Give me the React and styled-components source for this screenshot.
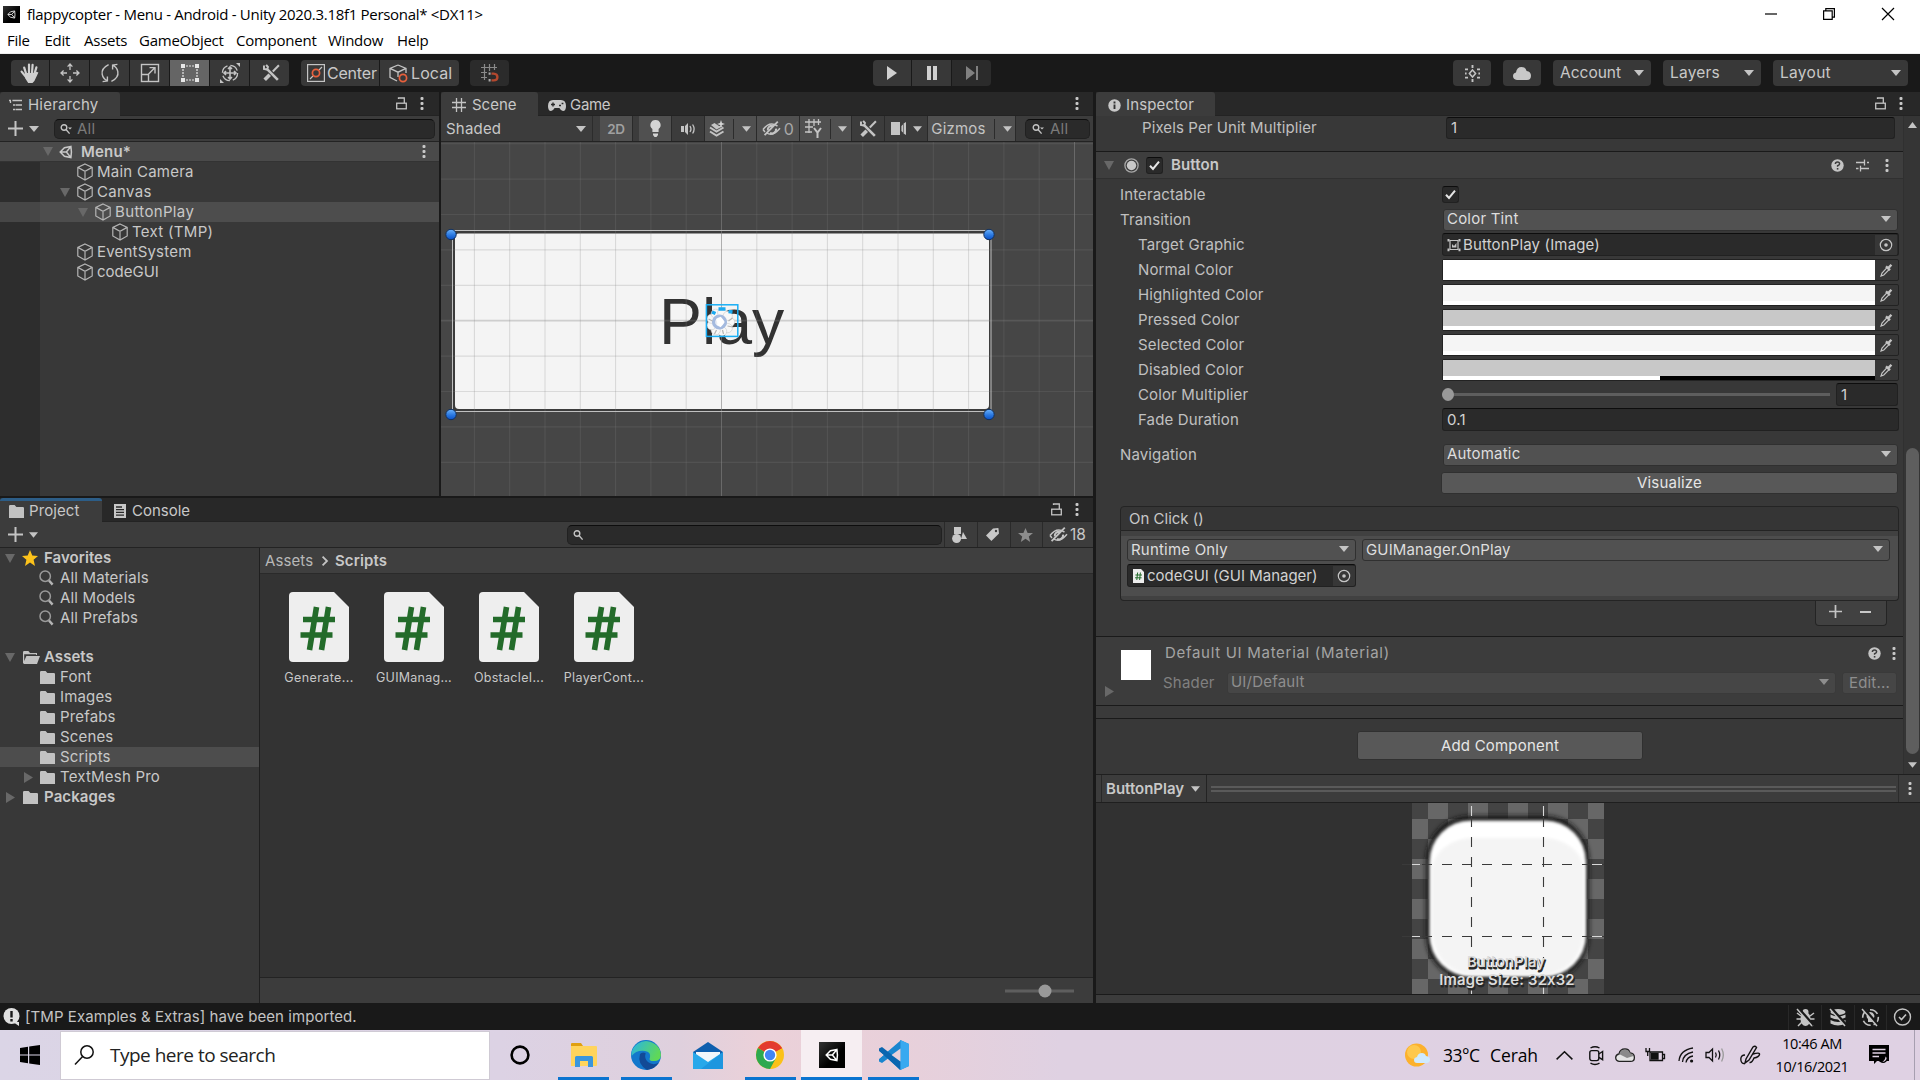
import React from "react";
import styled, { createGlobalStyle, css } from "styled-components";

const Global = createGlobalStyle`
  * { box-sizing: border-box; }
  body { margin: 0; background: #191919; overflow: hidden; }
`;

const ui = `Inter, "Liberation Sans", sans-serif`;
const win = `"Open Sans", "Noto Sans", sans-serif`;

/* ---------- primitives ---------- */
const Screen = styled.div`
  width: 1920px; height: 1080px; display: flex; flex-direction: column;
  background: #191919; color: #c8c8c8; font: 15px ${ui}; letter-spacing: 0.2px; white-space: nowrap; overflow: hidden;
  font-feature-settings: "calt" 0;
`;
const Row = styled.div`
  display: flex; align-items: center; flex: none;
  height: ${p => (p.$h ? p.$h + "px" : "auto")};
  padding-left: ${p => p.$pl || 0}px;
`;
const Col = styled.div`
  display: flex; flex-direction: column; flex: none; width: ${p => (p.$w ? p.$w + "px" : "auto")};
`;
const Gap = styled.div`flex: none; width: ${p => p.$w || 0}px; height: ${p => p.$h || 0}px;`;
const Grow = styled.div`flex: 1;`;
const Text = styled.span`
  flex: none; line-height: 20px;
  width: ${p => (p.$w ? p.$w + "px" : "auto")};
  font-weight: ${p => (p.$b ? 600 : 400)};
  ${p => p.$c && css`color: ${p.$c};`}
  ${p => p.$s && css`font-size: ${p.$s}px;`}
  ${p => p.$ls !== undefined && css`letter-spacing: ${p.$ls}px;`}
`;
const Svg = styled.svg`display: block; flex: none; overflow: visible;`;
const Ico = ({ w = 16, h, vb, children, c = "#c4c4c4", sw = 1.3, fill = "none" }) => (
  <Svg width={w} height={h || w} viewBox={vb || `0 0 ${w} ${h || w}`} fill={fill} stroke={fill === "none" ? c : "none"} strokeWidth={sw}>{children}</Svg>
);

/* ---------- icons ---------- */
const Down = ({ c = "#c4c4c4", w = 10, h = 6 }) => <Ico w={w} h={h} vb="0 0 10 6" fill={c}><path d="M0 0H10L5 6Z" /></Ico>;
const FoldDown = () => <Ico w={10} h={9} fill="#686868"><path d="M0 0H10L5 9Z" /></Ico>;
const FoldRight = () => <Ico w={9} h={11} fill="#686868"><path d="M0 0L9 5.5L0 11Z" /></Ico>;
const Dots = () => <Ico w={4} h={13} fill="#c8c8c8"><rect x="0.5" y="0" width="3" height="3" rx="1" /><rect x="0.5" y="5" width="3" height="3" rx="1" /><rect x="0.5" y="10" width="3" height="3" rx="1" /></Ico>;
const Lock = () => <Ico w={11} h={13}><rect x="0.7" y="6.2" width="9.6" height="5.6" /><path d="M2.5 2V1H8.3V6" /></Ico>;
const Cube = () => (
  <Ico w={18} h={18} c="#b4b4b4" sw={1.2}><path d="M9 1L16.2 4.4V13L9 17L1.8 13V4.4Z M1.8 4.4L9 8.2L16.2 4.4 M9 8.2V17" /></Ico>
);
const Unity = ({ w = 16, c = "#c8c8c8" }) => (
  <Ico w={w} vb="0 0 16 16" c={c} sw={1.7}><path d="M13.6 1.6L6.2 3.2L1.4 8L6.2 12.8L13.6 14.4L14.2 8Z M1.8 8H8.4L13.6 1.8 M8.4 8L13.6 14.2" /></Ico>
);
const Search = ({ arrow }) => (
  <Ico w={12} h={12} c="#c4c4c4" sw={1.4}><circle cx="4" cy="4.5" r="2.8" /><path d="M6.2 6.8L9.6 10.6" />{arrow && <path d="M8 4.4H12L10 6.6Z" fill="#c4c4c4" stroke="none" />}</Ico>
);
const BigSearch = () => <Ico w={15} h={16} c="#9a9a9a" sw={1.5}><circle cx="6.2" cy="6.2" r="5.2" /><path d="M10 10.5L13.6 14.6" stroke="#b4b4b4" strokeWidth="2.4" /></Ico>;
const Plus = ({ w = 15 }) => <Ico w={w} vb="0 0 15 15" sw={2}><path d="M7.5 0V15M0 7.5H15" /></Ico>;
const Folder = () => <Ico w={15} h={13} fill="#c2c2c2"><path d="M0 1.2Q0 0 1.2 0H5.6L7.4 2H13.8Q15 2 15 3V13H0Z" /></Ico>;
const FolderOpen = () => <Ico w={17} h={13} fill="#c2c2c2"><path d="M0 12V1.2Q0 0 1.2 0H5.4L7 2H14V4H13V3.2H1.2V10L3.4 5H17L14 13H1Z" /></Ico>;
const Check = () => <Ico w={13} h={13} c="#e6e6e6" sw={2}><path d="M2 6.8L5 10L11 2.6" /></Ico>;
const Hash = () => <Ico w={14} h={14} sw={1.3}><path d="M4.5 0V14M9.5 0V14M0 4.5H14M0 9.5H14" /></Ico>;
const Help = () => (
  <Ico w={13} h={13} fill="#c4c4c4"><circle cx="6.5" cy="6.5" r="6.2" /><path d="M4.4 5Q4.4 3 6.5 3Q8.6 3 8.6 4.8Q8.6 6 6.6 6.8V7.8" fill="none" stroke="#3c3c3c" strokeWidth="1.5" /><rect x="5.8" y="9" width="1.6" height="1.6" fill="#3c3c3c" /></Ico>
);
const Preset = () => <Ico w={13} h={13} sw={1.3}><path d="M0 3.5H8M11 3.5H13M8.5 0.6V6.4M0 9.5H2.5M5 9.5H13M4.5 6.8V12.4" /></Ico>;
const EyeOff = () => (
  <Ico w={19} h={15} sw={1.5}><path d="M1 8.5Q8 -0.5 15.5 5.2M18 7.2Q10.5 16 4.8 12M1 8.5L3 11" /><path d="M5.8 9.4A3.8 3.8 0 0 1 11 5.2M14 7.6A4 4 0 0 1 8 11.8" strokeWidth="2" /><path d="M2.6 14.2L15.8 0.6" strokeWidth="1.8" /></Ico>
);
const Tools = () => (
  <Ico w={18} h={18} vb="0 0 20 20" sw={2.8}><path d="M6 6L17.6 17.6" /><path d="M2.2 1.6V5.4L5.6 6.2L6.6 3.4L4.6 1" strokeWidth="2.2" /><path d="M18.8 1.4L12 8.4" strokeWidth="2.2" /><path d="M8.6 12L3 17.6" strokeWidth="4" /></Ico>
);
const Target = () => <Ico w={14} h={14} sw={1.2}><circle cx="7" cy="7" r="5.7" /><circle cx="7" cy="7" r="1.8" fill="#c4c4c4" stroke="none" /></Ico>;
const Dropper = () => <Ico w={13} h={14} sw={1.2}><path d="M7 4.6L2 10L1 13L3.8 12L8.8 6.8" /><path d="M6 3.4L10 7.2M8 5.4L11.4 1.8" strokeWidth="2.4" /></Ico>;
const CsFile = () => (
  <Ico w={60} h={70} fill="#eee"><path d="M4 0H45L60 15V66Q60 70 56 70H4Q0 70 0 66V4Q0 0 4 0Z" />
    <path d="M27.5 15L20.5 58M39.5 15L32.5 58M14 27.5H46M11.5 43H43.5" fill="none" stroke="#236b2a" strokeWidth="5.6" /></Ico>
);

/* ---------- window chrome ---------- */
const TitleBar = styled.div`
  display: flex; align-items: center; height: 28px; background: #fff; color: #000; font: 15px ${win}; letter-spacing: -0.3px; padding-left: 3px; flex: none;
`;
const UnityBadge = styled.div`
  width: ${p => p.$s}px; height: ${p => p.$s}px; background: linear-gradient(135deg, #333, #000 60%); display: grid; place-items: center; flex: none;
`;
const MenuBar = styled(TitleBar)`height: 26px; border-bottom: 1px solid #eee; padding: 0 0 1px 7px;`;
const MenuItem = styled.span`width: ${p => p.$w}px; letter-spacing: ${p => p.$ls || 0}px;`;

const Toolbar = styled(Row)`height: 38px; background: #191919; padding: 0 0 0 11px;`;
const ToolBtn = styled.div`
  height: 26px; width: ${p => p.$w}px; background: ${p => (p.$on ? "#656565" : p.$dim ? "#2b2b2b" : "#383838")};
  display: flex; align-items: center; justify-content: ${p => (p.$left ? "flex-start" : "center")}; flex: none;
  padding: 0 ${p => (p.$left ? 7 : 0)}px; gap: ${p => p.$gap || 0}px; margin-right: ${p => p.$mr ?? 1}px;
  border-radius: ${p => p.$r || "0"}; font-size: 16px; letter-spacing: ${p => p.$ls ?? 0.3}px;
`;
const PivotBtn = styled(ToolBtn)`padding-left: ${p => p.$pl}px; justify-content: flex-start;`;

const HandIcon = () => (
  <Ico w={20} h={20} c="#d0d0d0" sw={2.2}><path d="M6.5 12L4.2 4.6M9 10V1.6M12 10L12.6 1.8M14.4 11L16.4 4.4M1.6 8.6L6 14" strokeLinecap="round" /><path d="M5.4 10H15.2L16.4 8.8L18.4 9.4L14.4 18L12.5 20H8.2L5 15Z" fill="#d0d0d0" stroke="none" /></Ico>
);
const MoveIcon = () => <Ico w={20} h={20} sw={1.3}><path d="M10 1V7M10 13V19M1 10H7M13 10H19M7.6 3.6L10 1L12.4 3.6M7.6 16.4L10 19L12.4 16.4M3.6 7.6L1 10L3.6 12.4M16.4 7.6L19 10L16.4 12.4" /></Ico>;
const RotateIcon = () => <Ico w={20} h={20} sw={1.4}><path d="M8.6 1.6Q1 5.4 2.2 11.4Q3 15.6 7 17.6M2.6 18.6L7.4 18V13.4M11.4 18.4Q19 14.6 17.8 8.6Q17 4.4 13 2.4M17.4 1.4L12.6 2V6.6" /></Ico>;
const ScaleIcon = () => <Ico w={20} h={20} sw={1.4}><rect x="1.5" y="1.5" width="17" height="17" /><path d="M1.5 11.5H8.5V18.5M9.5 4.6H15V10.4M15 4.6L8.4 11.2" /></Ico>;
const RectIcon = () => <Ico w={20} h={20} c="#e6e6e6" sw={1.2}><path d="M6 3H14M6 17H14M3 6V14M17 6V14" strokeDasharray="2 1" /><path d="M3 1V5M3 15V19M17 1V5M17 15V19" strokeWidth="4" /></Ico>;
const TransformIcon = () => <Ico w={20} h={20} sw={1.3}><circle cx="10" cy="10" r="7.6" strokeDasharray="9 3" /><path d="M10 4V16M4 10H16M8 6L10 4L12 6M8 14L10 16L12 14M6 8L4 10L6 12M14 8L16 10L14 12" strokeWidth="1.6" /><path d="M16 0H20V4ZM0 16V20H4Z" fill="#c4c4c4" stroke="none" /></Ico>;
const CenterIcon = () => <Ico w={18} h={18} sw={1.2}><rect x="0.6" y="0.6" width="16.8" height="16.8" /><path d="M3 15L6 12M12 6L15 3" /><circle cx="9" cy="9" r="3.6" stroke="#e8603c" strokeWidth="1.7" /></Ico>;
const LocalIcon = () => <Ico w={19} h={19} sw={1.3}><path d="M9 1L17 4.4V9M9 1L1 4.4V13.4L8 17M1 4.4L9 8.2L17 4.4M9 8.2V13" /><circle cx="14" cy="14" r="3.6" stroke="#e8603c" strokeWidth="1.7" /></Ico>;
const SnapIcon = () => <Ico w={18} h={18} c="#8a8a8a" sw={1.2}><path d="M3.5 0V16M8.5 0V7M13.5 0V6M0 3.5H16M0 8.5H6M0 13.5H6" /><path d="M10.5 9.6H12.5Q16.4 9.8 16.4 13Q16.4 16.4 12.5 16.4H10.5" stroke="#b4482e" strokeWidth="2.4" /><path d="M8.6 8.4V10.8M8.6 15V17.6" stroke="#aaa" strokeWidth="2" /></Ico>;
const CollabIcon = () => <Ico w={17} h={17} sw={1.5}><path d="M8.5 5L11.6 8.5L8.5 12L5.4 8.5Z" /><path d="M8.5 0V3M8.5 14V17M1 4.4H4M13 4.4H16M1 12.6H4M13 12.6H16M1 8.5H2.6M14.4 8.5H16" strokeWidth="1.9" /></Ico>;

const EditorToolbar = () => (
  <Toolbar>
    <ToolBtn $w={38} $r="4px 0 0 4px"><HandIcon /></ToolBtn>
    <ToolBtn $w={39}><MoveIcon /></ToolBtn>
    <ToolBtn $w={39}><RotateIcon /></ToolBtn>
    <ToolBtn $w={39}><ScaleIcon /></ToolBtn>
    <ToolBtn $w={39} $on><RectIcon /></ToolBtn>
    <ToolBtn $w={39}><TransformIcon /></ToolBtn>
    <ToolBtn $w={39} $r="0 4px 4px 0" $mr={12}><Gap $w={2} /><Tools /></ToolBtn>
    <PivotBtn $w={78} $r="4px 0 0 4px" $pl={6} $gap={2} $ls={-0.2}><CenterIcon />Center</PivotBtn>
    <PivotBtn $w={79} $r="0 4px 4px 0" $pl={9} $gap={3} $ls={0.1} $mr={11}><LocalIcon />Local</PivotBtn>
    <ToolBtn $w={39} $dim $r="4px"><SnapIcon /></ToolBtn>
    <Gap $w={363} />
    <ToolBtn $w={38} $r="4px 0 0 4px"><Ico w={10} h={14} fill="#d0d0d0"><path d="M0 0L10 7L0 14Z" /></Ico></ToolBtn>
    <ToolBtn $w={39}><Ico w={10} h={14} fill="#d0d0d0"><path d="M0 0H4V14H0ZM6 0H10V14H6Z" /></Ico></ToolBtn>
    <ToolBtn $w={39} $dim $r="0 4px 4px 0" $mr={462}><Ico w={12} h={14} fill="#808080"><path d="M0 0L9 7L0 14ZM10 0H12V14H10Z" /></Ico></ToolBtn>
    <ToolBtn $w={38} $r="4px" $mr={12}><CollabIcon /></ToolBtn>
    <ToolBtn $w={38} $r="4px" $mr={12}><Ico w={18} h={13} fill="#c8c8c8"><path d="M4 13Q0 12.6 0 9Q0 6.4 3 5.6Q3.6 0 8.6 0Q12.6 0 13.6 4Q18 4.6 18 8.8Q18 13 14 13Z" /></Ico></ToolBtn>
    {[["Account", 98, 0], ["Layers", 98, 0.2], ["Layout", 135, 0.3]].map(([t, w, ls]) => (
      <ToolBtn key={t} $w={w} $r="4px" $left $mr={12} $ls={ls}><Text $s={15.5}>{t}</Text><Grow /><Down /></ToolBtn>
    ))}
  </Toolbar>
);

/* ---------- panels ---------- */
const Main = styled.div`display: flex; height: 911px; flex: none;`;
const TabStrip = styled(Row)`height: 24px; background: #282828; align-items: flex-end; border-bottom: 1px solid #232323;`;
const Tab = styled.div`
  height: 24px; margin-bottom: -1px; width: ${p => p.$w}px; display: flex; align-items: center; flex: none;
  gap: ${p => p.$gap || 5}px; padding: ${p => (p.$focus ? "0 0 1px" : "2px 0 0")} ${p => p.$pl || 8}px;
  padding-right: 0; padding-left: ${p => p.$pl || 8}px; border-radius: 3px 3px 0 0;
  background: ${p => (p.$off ? "transparent" : "#3c3c3c")};
  border-top: ${p => (p.$focus ? "3px solid #2c5d87" : "0")};
  line-height: 20px; letter-spacing: ${p => p.$ls ?? 0.3}px;
`;
const PanelBar = styled(Row)`height: 26px; background: #3c3c3c; border-bottom: 1px solid #232323;`;
const Field = styled.div`
  height: ${p => p.$h || 20}px; width: ${p => p.$w}px; background: #2a2a2a; border: 1px solid #212121; border-top-color: #0d0d0d;
  border-radius: ${p => p.$r ?? 3}px; display: flex; align-items: center; padding-left: ${p => p.$pl ?? 4}px; gap: ${p => p.$gap || 0}px; flex: none; color: #d2d2d2;
  overflow: hidden;
`;
const SearchField = styled(Field)`border-radius: 5px; color: #7a7a7a;`;

const Tree = styled.div`flex: 1; display: flex; flex-direction: column; background: #383838;`;
const TreeBody = styled(Tree)`background: linear-gradient(90deg, #2d2d2d 40px, #383838 40px);`;
const TreeRow = styled(Row)`
  height: 20px; padding-left: ${p => p.$pl}px; background: ${p => (p.$on ? "#4d4d4d" : "transparent")};
  ${p => p.$head && css`background: #4a4a4a; border-bottom: 1px solid #333;`}
`;
const SelGutter = styled(TreeRow)`background: linear-gradient(90deg, #464646 40px, #4d4d4d 40px);`;
const FoldSlot = styled.div`width: ${p => p.$w || 16}px; flex: none; display: flex;`;

const hier = [
  [76, "Main Camera", 0, 0, 0.25], [60, "Canvas", 1, 0, 0.35], [78, "ButtonPlay", 1, 1, 0.35],
  [111, "Text (TMP)", 0, 0, 0.3], [76, "EventSystem", 0, 0, 0.2], [76, "codeGUI", 0, 0, 0],
];
const Hierarchy = () => (
  <Col $w={439}>
    <TabStrip>
      <Tab $w={120} $pl={9} $gap={6} $ls={0.2}><Ico w={13} h={12} sw={1.3}><path d="M0 1.5H2M3.4 1.5H13M4 6H6M6.5 6H13M4 10.5H6M6.5 10.5H13M1.5 2V4" /></Ico>Hierarchy</Tab>
      <Gap $w={276} /><Row $h={24}><Lock /><Gap $w={13} /><Dots /></Row>
    </TabStrip>
    <PanelBar>
      <Gap $w={8} /><Plus /><Gap $w={6} /><Down /><Gap $w={15} />
      <SearchField $w={381} $pl={5} $gap={5}><Search arrow />All</SearchField>
    </PanelBar>
    <TreeBody>
      <TreeRow $pl={43} $head><FoldSlot $w={16}><FoldDown /></FoldSlot><Unity w={14} /><Gap $w={8} /><Text $b $w={341} $ls={0.2}>Menu*</Text><Dots /></TreeRow>
      {hier.map(([x, t, f, on, ls]) => {
        const R = on ? SelGutter : TreeRow;
        return <R key={t} $pl={x}>{!!f && <FoldSlot><FoldDown /></FoldSlot>}<Cube /><Gap $w={3} /><Text $ls={ls}>{t}</Text></R>;
      })}
    </TreeBody>
  </Col>
);

const SBtn = styled.div`
  height: 25px; width: ${p => p.$w}px; background: ${p => (p.$on ? "#505050" : "transparent")};
  border-right: 1px solid #2a2a2a; display: flex; align-items: center; justify-content: center; gap: ${p => p.$gap || 0}px; flex: none; color: #c4c4c4;
`;
const VLine = styled.div`width: 1px; height: ${p => p.$h || 20}px; background: #2c2c2c; flex: none;`;

const Viewport = styled.div`flex: 1; background: #464646; overflow: hidden;`;
const Scene = () => {
  const ox = 441, oy = 142;
  const vs = Array.from({ length: 18 }, (_, i) => 721.5 + 35.3 * (i - 7) - ox);
  const hs = Array.from({ length: 10 }, (_, i) => 320.7 + 35.4 * (i - 5) - oy);
  return (
    <Viewport>
      <Svg width="652" height="354">
        <defs>
          <linearGradient id="knob" x1="0" y1="0" x2="0" y2="1"><stop offset="0" stopColor="#6db4ff" /><stop offset="0.55" stopColor="#2a78e0" /><stop offset="1" stopColor="#0a50c8" /></linearGradient>
        </defs>
        <rect x="12" y="89" width="538" height="180" fill="#3c3c3c" />
        <rect x="14" y="91.5" width="534" height="175.5" rx="4" fill="#f4f4f4" />
        <text x="218" y="201.5" fontFamily="Liberation Sans, Arial, sans-serif" fontSize="64.4" letterSpacing="0" fill="#323232">Play</text>
        {vs.map((x, i) => <path key={i} d={`M${x} 0V354`} stroke="#808080" strokeOpacity={i === 7 || i === 17 ? 0.6 : 0.25} />)}
        {hs.map((y, i) => <path key={i} d={`M0 ${y}H652`} stroke="#808080" strokeOpacity={i === 5 ? 0.32 : 0.22} strokeWidth={i === 5 ? 1.8 : 1.2} />)}
        <rect x="11.5" y="88.5" width="538.5" height="181" fill="none" stroke="#c0c0c0" />
        {[[10, 92.5], [548, 92.5], [10, 272.5], [548, 272.5]].map(([x, y], i) => <circle key={i} cx={x} cy={y} r="5.2" fill="url(#knob)" stroke="#12305c" strokeWidth="1" />)}
        <g transform="translate(279.5 180)">
          {Array.from({ length: 9 }, (_, i) => <circle key={i} cx={9.5 * Math.cos(i * 0.698)} cy={9.5 * Math.sin(i * 0.698)} r="4.6" fill="#f8f8f8" stroke="#cacaca" strokeWidth="0.6" />)}
          <path d="M-8.500 -10L-5 -8.500M-2 -13H5M8 -10.500L12 -10" stroke="#1aa9ef" strokeWidth="3.4" />
          <circle r="6" cx="-1" fill="#e8ecf4" stroke="#a4badf" strokeWidth="3.2" />
          <path d="M-4 -2L0 -4L3 0L0 4L-3 2M-2 0L2 2" fill="#fff" stroke="#fff" strokeWidth="2" />
          <path d="M-12 -3L-8 -1M12 5L7 4M-6 12L-4 8M12 -4L8 -1M3 12L2 8" stroke="#b4b4b4" strokeWidth="1.2" />
        </g>
        <rect x="265.4" y="162.8" width="31.4" height="31.6" fill="none" stroke="#19aef5" strokeWidth="1.5" />
      </Svg>
    </Viewport>
  );
};
const ScenePanel = () => (
  <Col $w={652}>
    <TabStrip>
      <Tab $w={97} $pl={11} $gap={6} $ls={0}><Hash />Scene</Tab>
      <Tab $off $w={100} $pl={10} $gap={4} $ls={-0.3}><Ico w={18} h={11} fill="#c8c8c8"><path d="M5 0H13Q18 0 18 6Q18 11 15 11Q13 11 11.4 8H6.6Q5 11 3 11Q0 11 0 6Q0 0 5 0Z" /><path d="M3 4.5H7M5 2.5V6.5M11 5.5H13M13.6 3.5H15.4" stroke="#282828" strokeWidth="1.4" /></Ico>Game</Tab>
      <Gap $w={437} /><Row $h={24}><Dots /></Row>
    </TabStrip>
    <PanelBar>
      <Gap $w={5} /><Text $w={130} $ls={0.2}>Shaded</Text><Down /><Gap $w={6} /><VLine $h={25} /><Gap $w={7} />
      <SBtn $w={33} $on><Text $s={13.5} $ls={-0.3} $c="#a0a0a0" $b>2D</Text></SBtn><Gap $w={6} />
      <SBtn $w={33} $on><Ico w={11} h={17} fill="#d4d4d4"><path d="M5.5 0A5 5 0 0 1 8.6 9V12H2.4V9A5 5 0 0 1 5.5 0ZM3 13.5H8V15L6.5 17H4.5L3 15Z" /></Ico></SBtn>
      <SBtn $w={33}><Ico w={15} h={14} sw={1.3}><path d="M0 4H3V10H0ZM4 4L7 1V13L4 10Z" fill="#c4c4c4" stroke="none" /><path d="M9 4Q11 7 9 10M11.6 2.5Q14.6 7 11.6 11.5" /></Ico></SBtn>
      <SBtn $w={52} $on $gap={8}><Ico w={15} h={17} sw={2}><path d="M0 7.5L6.500 11.500L13.500 7.500M0 11.500L6.500 15.500L13.500 11.500" /><path d="M1 5L4.500 3L9 6L13 6L6.500 9.500Z" fill="#c4c4c4" stroke="none" /><path d="M11 0L12 3L15 4L12 5L11 8L10 5L7 4L10 3Z" fill="#d4d4d4" stroke="none" /></Ico><VLine /><Down w={9} /></SBtn>
      <SBtn $w={43} $on $gap={3}><EyeOff /><Text $c="#a8a8a8" $s={16}>0</Text></SBtn>
      <SBtn $w={52} $on $gap={7}><Ico w={18} h={20} sw={1.3}><path d="M4 0V14M9 0V7M13.5 0V6M0 3H16M0 8H8M0 13H7" /><path d="M9 9L12.5 13.5L16 9M12.5 13V19" strokeWidth="2" /></Ico><VLine /><Down w={9} /></SBtn>
      <SBtn $w={33}><Tools /></SBtn>
      <SBtn $w={43} $gap={7}><Ico w={15} h={13} fill="#c4c4c4"><path d="M0 0H9V13H0ZM10.4 4L12 2.6V10.4L10.4 9ZM12.6 1.6L15 0V13L12.6 11.4Z" /></Ico><Down w={9} /></SBtn>
      <SBtn $w={88} $on $gap={8}><Text $ls={0.2}>Gizmos</Text><VLine /><Down w={9} /></SBtn>
      <Gap $w={9} /><SearchField $w={65} $pl={6} $gap={6}><Search arrow />All</SearchField>
    </PanelBar>
    <Scene />
  </Col>
);

/* ---------- project ---------- */
const ProjectBody = styled.div`display: flex; flex: 1;`;
const AssetTree = styled.div`width: 260px; background: #383838; border-right: 1px solid #1f1f1f; flex: none;`;
const AssetPane = styled.div`width: 833px; background: #333; display: flex; flex-direction: column; flex: none;`;
const Crumbs = styled(Row)`height: 26px; background: #3f3f3f; border-bottom: 1px solid #2a2a2a; padding-left: 5px;`;
const Files = styled.div`display: flex; gap: 5px; padding: 18px 0 0 14px; flex: 1;`;
const FileCell = styled.div`width: 90px; display: flex; flex-direction: column; align-items: center; gap: 6px; font-size: 12.5px; letter-spacing: ${p => p.$ls}px;`;
const ZoomBar = styled(Row)`height: 26px; background: #3c3c3c; border-top: 1px solid #232323; padding-left: 745px;`;
const PBtn = styled.div`height: 25px; width: ${p => p.$w}px; border-left: 1px solid #2a2a2a; display: flex; align-items: center; justify-content: center; gap: 2px; padding-right: 3px; flex: none;`;

const tree = [["Font"], ["Images"], ["Prefabs"], ["Scenes"], ["Scripts", 1]];
const Project = () => (
  <Col>
    <TabStrip>
      <Tab $w={102} $focus $pl={9} $gap={5} $ls={0.1}><Folder />Project</Tab>
      <Tab $off $w={120} $pl={12} $gap={6} $ls={0}><Ico w={12} h={14} fill="#c8c8c8"><path d="M0 0H12V14H0Z" /><path d="M2 3H8M2 5.6H10M2 8.4H10M2 11.2H10" stroke="#282828" strokeWidth="1.3" /></Ico>Console</Tab>
      <Gap $w={829} /><Row $h={24}><Lock /><Gap $w={13} /><Dots /></Row>
    </TabStrip>
    <PanelBar>
      <Gap $w={8} /><Plus /><Gap $w={6} /><Down w={9} /><Gap $w={529} />
      <SearchField $w={375} $pl={5}><Search /></SearchField><Gap $w={2} />
      <PBtn $w={33}><Ico w={15} h={16} fill="#c8c8c8"><rect x="2" y="0" width="7" height="7" /><circle cx="4.6" cy="11.5" r="4.5" /><path d="M11 5L15 12H9Z" /></Ico></PBtn>
      <PBtn $w={33}><Ico w={13} h={13} fill="#c8c8c8"><path d="M7 0.6L12.4 0L13 5.4L5.4 13L0 7.4Z" /><circle cx="10" cy="3" r="1.2" fill="#3c3c3c" /></Ico></PBtn>
      <PBtn $w={32}><Ico w={15} h={14} fill="#8c8c8c"><path d="M7.5 0L9.6 5H15L10.8 8.4L12.2 14L7.5 10.8L2.8 14L4.2 8.4L0 5H5.4Z" /></Ico></PBtn>
      <PBtn $w={53}><EyeOff /><Text $s={15.5} $ls={0}>18</Text></PBtn>
    </PanelBar>
    <ProjectBody>
      <AssetTree>
        <TreeRow $pl={5}><FoldDown /><Gap $w={7} /><Ico w={16} h={16} fill="#fcc21b"><path d="M8 0L10.3 5.4L16 6L11.6 9.8L13 16L8 12.6L3 16L4.4 9.8L0 6L5.7 5.4Z" /></Ico><Gap $w={6} /><Text $b $ls={0.05}>Favorites</Text></TreeRow>
        {["All Materials", "All Models", "All Prefabs"].map(t => <TreeRow key={t} $pl={39}><BigSearch /><Gap $w={6} /><Text $ls={0.15}>{t}</Text></TreeRow>)}
        <Gap $h={19} />
        <TreeRow $pl={5}><FoldDown /><Gap $w={8} /><FolderOpen /><Gap $w={4} /><Text $b $ls={0.05}>Assets</Text></TreeRow>
        {tree.map(([t, on]) => <TreeRow key={t} $pl={40} $on={on}><Folder /><Gap $w={5} /><Text $ls={0.15}>{t}</Text></TreeRow>)}
        <TreeRow $pl={24}><FoldRight /><Gap $w={7} /><Folder /><Gap $w={5} /><Text $ls={0.2}>TextMesh Pro</Text></TreeRow>
        <TreeRow $pl={6}><FoldRight /><Gap $w={8} /><Folder /><Gap $w={6} /><Text $b $ls={0.1}>Packages</Text></TreeRow>
      </AssetTree>
      <AssetPane>
        <Crumbs><Text $w={57} $ls={0.1} $c="#b8b8b8">Assets</Text><Ico w={6} h={10} sw={1.8}><path d="M0.6 0.6L5 5L0.6 9.4" /></Ico><Gap $w={7} /><Text $b $ls={0.1}>Scripts</Text></Crumbs>
        <Files>
          {[["Generate...", 0.4], ["GUIManag...", 0.25], ["ObstacleI...", 0.3], ["PlayerCont...", 0.4]].map(([t, ls]) => <FileCell key={t} $ls={ls}><CsFile /><Text>{t}</Text></FileCell>)}
        </Files>
        <ZoomBar><Ico w={70} h={14} fill="#5e5e5e"><rect x="0" y="5.5" width="69" height="3" /><circle cx="40" cy="7" r="6.5" fill="#999" /></Ico></ZoomBar>
      </AssetPane>
    </ProjectBody>
  </Col>
);

/* ---------- inspector ---------- */
const InspectorPane = styled.div`width: 824px; margin-left: 3px; background: #383838; display: flex; flex-direction: column; flex: none;`;
const ScrollArea = styled.div`display: flex; height: 659px; flex: none; border-bottom: 1px solid #1f1f1f;`;
const Body = styled.div`width: 807px; flex: none; display: flex; flex-direction: column;`;
const ScrollBar = styled.div`width: 17px; background: #353535; border-left: 1px solid #303030; display: flex; flex-direction: column; align-items: center; padding-top: 6px; flex: none;`;
const Thumb = styled.div`width: 13px; height: 306px; border-radius: 7px; background: #5e5e5e; margin: 320px 0 8px; flex: none;`;
const CompHead = styled(Row)`height: 28px; background: #3e3e3e; border-top: 1px solid #1a1a1a; border-bottom: 1px solid #303030; padding-left: 8px;`;
const CheckBox = styled.div`width: 17px; height: 17px; border-radius: 3px; background: #2a2a2a; border: 1px solid #212121; border-top-color: #0d0d0d; display: grid; place-items: center; flex: none;`;
const PropRow = styled(Row)`height: 25px;`;
const Label = styled.div`width: 322px; padding-left: ${p => (p.$sub ? 18 : 0)}px; flex: none; letter-spacing: 0.13px; color: #c0c0c0;`;
const Drop = styled.div`
  height: 22px; width: ${p => p.$w}px; border-radius: 3px; background: ${p => (p.$dim ? "#464646" : "#515151")}; border: 1px solid ${p => (p.$dim ? "#3a3a3a" : "#303030")};
  color: ${p => (p.$dim ? "#8e8e8e" : "#dedede")}; display: flex; align-items: center; padding: 0 6px 2px 3px; flex: none; letter-spacing: ${p => p.$ls ?? 0.2}px;
`;
const Btn = styled.div`
  height: ${p => p.$h || 22}px; width: ${p => p.$w}px; border-radius: 3px; background: ${p => (p.$dim ? "#464646" : "#585858")}; border: 1px solid ${p => (p.$dim ? "#3a3a3a" : "#303030")};
  color: ${p => (p.$dim ? "#8e8e8e" : "#e6e6e6")}; display: flex; align-items: center; justify-content: center; flex: none; letter-spacing: 0.2px;
`;
const PickSlot = styled.div`width: 22px; height: 20px; display: grid; place-items: center; background: #373737; flex: none;`;
const ColorField = styled.div`display: flex; width: 457px; height: 22px; border: 1px solid #222; border-radius: 2px; flex: none;`;
const Swatch = styled.div`width: 432px; background: ${p => p.$c}; display: flex; align-items: flex-end; flex: none;`;
const Alpha = styled.div`height: 4px; flex: 1; background: linear-gradient(90deg, #fff ${p => p.$a}%, #000 ${p => p.$a}%);`;
const Slider = styled.div`width: 388px; height: 3px; background: #5e5e5e; display: flex; align-items: center; flex: none;`;
const SliderKnob = styled.div`width: 12px; height: 13px; border-radius: 50%; background: #999; flex: none;`;
const EventHead = styled(Row)`width: 779px; height: 25px; background: #353535; border: 1px solid #242424; border-radius: 4px 4px 0 0; padding-left: 8px; letter-spacing: 0;`;
const EventBody = styled.div`width: 779px; height: 70px; background: #414141; border: 1px solid #242424; border-top: 0; border-radius: 0 0 4px 4px; padding-top: 5px; flex: none;`;
const EventItem = styled.div`height: 60px; background: #4d4d4d; padding: 3px 0 0 6px; display: flex; flex-direction: column; gap: 3px;`;
const EventFoot = styled.div`width: 72px; height: 25px; margin-left: 695px; background: #414141; border: 1px solid #242424; border-top: 0; border-radius: 0 0 4px 4px; display: flex; align-items: center; justify-content: center; gap: 18px; padding: 0 3px 3px 0; flex: none;`;
const MiniCs = () => <Ico w={12} h={14} fill="#eee"><path d="M1 0H9L12 3V14H1Z" /><path d="M5.6 3.5L4.8 11M8.4 3.5L7.6 11M3.4 6H10M3 8.8H9.6" fill="none" stroke="#236b2a" strokeWidth="1" /></Ico>;
const Material = styled.div`height: 69px; background: #3c3c3c; border-top: 1px solid #1a1a1a; display: flex; flex: none;`;
const MatSwatch = styled.div`width: 30px; height: 30px; background: #fff; margin-top: 13px; flex: none;`;
const MatFold = styled.div`width: 25px; padding: 49px 0 0 9px; flex: none;`;
const ThinStrip = styled.div`height: 14px; background: #3a3a3a; border-top: 1px solid #1a1a1a; border-bottom: 1px solid #1a1a1a; flex: none;`;
const PreviewHead = styled(Row)`height: 28px; background: #3c3c3c; border-bottom: 1px solid #1f1f1f; padding-left: 5px;`;
const PreviewName = styled(Row)`height: 27px; width: 106px; border-left: 1px solid #282828; border-right: 1px solid #232323; padding: 1px 0 0 4px;`;
const Grip = styled.div`width: 685px; height: 6px; margin: 0 2px 0 4px; border-top: 2px solid #5a5a5a; border-bottom: 2px solid #5a5a5a; flex: none;`;
const Preview = styled.div`height: 191px; background: #313131; display: flex; justify-content: center; flex: none;`;
const PreviewFoot = styled.div`height: 9px; background: #3c3c3c; border-top: 1px solid #1a1a1a; flex: none;`;

const SpritePreview = () => (
  <Svg width="192" height="191">
    <defs>
      <pattern id="chk" x="-4" y="-4" width="40" height="40" patternUnits="userSpaceOnUse"><rect width="40" height="40" fill="#676767" /><path d="M0 0H20V20H0ZM20 20H40V40H20Z" fill="#444" /></pattern>
      <filter id="soft" x="-10%" y="-10%" width="120%" height="120%"><feGaussianBlur stdDeviation="2.6" /></filter>
      <filter id="soft2" x="-10%" y="-10%" width="120%" height="120%"><feGaussianBlur stdDeviation="1.5" /></filter>
    </defs>
    <rect width="192" height="191" fill="url(#chk)" />
    <rect x="14" y="13" width="163" height="164" rx="44" fill="#161616" filter="url(#soft)" />
    <rect x="17.500" y="17.500" width="156.500" height="156" rx="41" fill="#fff" filter="url(#soft2)" />
    <path d="M20 64Q26 40 56 35H136Q166 40 172 64V132Q166 168 132 172H60Q26 168 20 132Z" fill="#f4f4f4" filter="url(#soft2)" />
    <g stroke="#3a3a3a" strokeWidth="1.1" strokeDasharray="10 10">
      <path d="M59.5 14V191M131.5 14V191M-10 61.5H192M-10 133.5H192" />
    </g>
    <g stroke="#d8d8d8" strokeWidth="1.1"><path d="M59.5 3V13M131.5 3V13M0 61.5H8M180 61.5H190M0 133.5H8M180 133.5H190M59.5 183V191M131.5 183V191" /></g>
    <g fontFamily={ui} fontSize="14.8" fontWeight="600" textAnchor="middle" strokeLinejoin="round">
      <g fill="#262626" stroke="#262626" strokeWidth="0.8"><text x="95" y="165.500" letterSpacing="0.1">ButtonPlay</text><text x="96" y="183.500" letterSpacing="0.2">Image Size: 32x32</text></g>
      <g fill="#dcdcdc"><text x="94" y="164" letterSpacing="0.1">ButtonPlay</text><text x="95" y="182" letterSpacing="0.2">Image Size: 32x32</text></g>
    </g>
  </Svg>
);

const colors = [["Normal Color", "#fff", 100], ["Highlighted Color", "#f5f5f5", 100], ["Pressed Color", "#c8c8c8", 100], ["Selected Color", "#f5f5f5", 100], ["Disabled Color", "#c8c8c8", 50.2]];
const Inspector = () => (
  <InspectorPane>
    <TabStrip>
      <Tab $w={119} $pl={12} $gap={5} $ls={0.15}><Ico w={13} h={13} fill="#c8c8c8"><circle cx="6.5" cy="6.5" r="6.2" /><path d="M6.5 5.6V10M6.5 2.6V4.4" stroke="#333" strokeWidth="1.9" /></Ico>Inspector</Tab>
      <Gap $w={660} /><Row $h={24}><Lock /><Gap $w={13} /><Dots /></Row>
    </TabStrip>
    <ScrollArea>
      <Body>
        <Row $h={23} $pl={46}><Text $w={304} $c="#c0c0c0" $ls={0.1}>Pixels Per Unit Multiplier</Text><Field $w={449} $h={22}>1</Field></Row>
        <Gap $h={12} />
        <CompHead>
          <FoldDown /><Gap $w={10} /><Ico w={15} h={15}><circle cx="7.5" cy="7.5" r="6.6" stroke="#a8a8a8" strokeWidth="1.3" /><circle cx="7.5" cy="7.5" r="4.7" fill="#c8c8c8" stroke="none" /></Ico><Gap $w={7} />
          <CheckBox><Check /></CheckBox><Gap $w={8} /><Text $w={660} $b $ls={0.1}>Button</Text><Help /><Gap $w={12} /><Preset /><Gap $w={16} /><Dots />
        </CompHead>
        <Gap $h={3} />
        <Row $pl={24}>
          <Col>
            <PropRow><Label>Interactable</Label><CheckBox><Check /></CheckBox></PropRow>
            <PropRow><Label>Transition</Label><Gap $w={1} /><Drop $w={455}>Color Tint<Grow /><Down /></Drop></PropRow>
            <PropRow><Label $sub>Target Graphic</Label><Field $w={457} $h={23} $gap={2}><Ico w={14} h={14} sw={1.2}><path d="M3 2.5H11V11.5H3Z" /><path d="M1.5 1V3.6M12.5 1V3.6M1.5 10.6V13.2M12.5 10.6V13.2" strokeWidth="2" /><path d="M5 9.5V6L7 8L9.4 5V9.5Z" fill="#c4c4c4" stroke="none" /></Ico><Text $w={410} $ls={0.15}>ButtonPlay (Image)</Text><PickSlot><Target /></PickSlot></Field></PropRow>
            {colors.map(([t, c, a]) => <PropRow key={t}><Label $sub>{t}</Label><ColorField><Swatch $c={c}><Alpha $a={a} /></Swatch><PickSlot><Dropper /></PickSlot></ColorField></PropRow>)}
            <PropRow><Label $sub>Color Multiplier</Label><Slider><SliderKnob /></Slider><Gap $w={6} /><Field $w={62} $h={23}>1</Field></PropRow>
            <PropRow><Label $sub>Fade Duration</Label><Field $w={457} $h={23}>0.1</Field></PropRow>
            <Gap $h={10} />
            <PropRow><Label>Navigation</Label><Gap $w={1} /><Drop $w={455}>Automatic<Grow /><Down /></Drop></PropRow>
            <Gap $h={3} />
            <PropRow><Gap $w={321} /><Btn $w={457}>Visualize</Btn></PropRow>
            <Gap $h={11} />
            <EventHead>On Click ()</EventHead>
            <EventBody>
              <EventItem>
                <Row><Drop $w={229}>Runtime Only<Grow /><Down /></Drop><Gap $w={6} /><Drop $w={528} $ls={0.15}>GUIManager.OnPlay<Grow /><Down /></Drop></Row>
                <Row><Field $w={229} $h={23} $gap={3}><MiniCs /><Text $w={183} $ls={0}>codeGUI (GUI Manager)</Text><PickSlot><Target /></PickSlot></Field></Row>
              </EventItem>
            </EventBody>
            <EventFoot><Plus w={13} /><Ico w={11} h={2} fill="#c8c8c8"><rect width="11" height="2" /></Ico></EventFoot>
          </Col>
        </Row>
        <Gap $h={10} />
        <Material>
          <MatFold><FoldRight /></MatFold><MatSwatch />
          <Col>
            <Gap $h={6} />
            <Row $h={20} $pl={14}><Text $w={703} $c="#a4a4a4" $ls={0.7}>Default UI Material (Material)</Text><Help /><Gap $w={11} /><Dots /></Row>
            <Gap $h={8} />
            <Row $h={23} $pl={12}><Text $w={64} $c="#808080" $ls={0.2}>Shader</Text><Drop $dim $w={609}>UI/Default<Grow /><Down c="#8e8e8e" /></Drop><Gap $w={6} /><Btn $dim $w={55}>Edit...</Btn></Row>
          </Col>
        </Material>
        <ThinStrip />
        <Gap $h={12} />
        <Row $pl={261}><Btn $w={286} $h={29}>Add Component</Btn></Row>
      </Body>
      <ScrollBar>
        <Ico w={9} h={6} fill="#c4c4c4"><path d="M0 6H9L4.5 0Z" /></Ico><Thumb /><Down w={9} />
      </ScrollBar>
    </ScrollArea>
    <PreviewHead>
      <PreviewName><Text $b $ls={0} $w={85}>ButtonPlay</Text><Down w={9} /></PreviewName><Grip /><VLine $h={27} /><Gap $w={9} /><Dots />
    </PreviewHead>
    <Preview><SpritePreview /></Preview>
    <PreviewFoot />
  </InspectorPane>
);

/* ---------- status bar + taskbar ---------- */
const Status = styled(Row)`height: 27px; background: #191919; padding: 1px 0 0 3px; color: #c4c4c4;`;
const StatusIcon = styled.div`width: ${p => p.$w || 33}px; height: 25px; border-left: 1px solid #282828; display: grid; place-items: center; flex: none;`;
const Taskbar = styled.div`
  height: 50px; display: flex; align-items: center; flex: none; color: #000; font-family: ${win};
  background: linear-gradient(90deg, #dbd5e6 0, #dcd2e4 500px, #dfd0dd 680px, #ebd1d9 760px, #e8d0da 900px, #dfd1e2 1060px, #dfd1e3 100%);
`;
const StartSlot = styled.div`width: 60px; height: 50px; display: grid; place-items: center; flex: none;`;
const TaskSearch = styled.div`width: 430px; height: 49px; margin-top: 1px; background: #fff; border: 1px solid #cfcad4; display: flex; align-items: center; padding: 0 0 1px 13px; gap: 16px; font-size: 19px; letter-spacing: -0.5px; flex: none; color: #222;`;
const AppSlot = styled.div`
  width: ${p => p.$w}px; height: 50px; display: flex; flex-direction: column; align-items: center; justify-content: flex-end; flex: none;
  background: ${p => (p.$on ? "#f6eef2" : "transparent")};
`;
const AppIcon = styled.div`height: 47px; display: grid; place-items: center; padding-top: 3px;`;
const Under = styled.div`height: 3px; width: ${p => p.$w}px; background: ${p => (p.$w ? "#0a74d0" : "transparent")};`;
const TaskApp = ({ w = 62, u = 51, on, children }) => <AppSlot $w={w} $on={on}><AppIcon>{children}</AppIcon><Under $w={u} /></AppSlot>;
const Clock = styled.div`width: 84px; text-align: center; font: 14.5px/23px ${win}; letter-spacing: -0.4px; flex: none;`;

const Slash = () => <path d="M2.500 0.500L17.500 17.500" stroke="#191919" strokeWidth="3" />;
const TaskBarRow = () => (
  <Taskbar>
    <StartSlot><Ico w={20} h={20} fill="#000"><path d="M0 3L8 1.8V9.4H0ZM9.2 1.6L20 0V9.4H9.2ZM0 10.6H8V18.2L0 17ZM9.2 10.6H20V20L9.2 18.4Z" /></Ico></StartSlot>
    <TaskSearch><Ico w={20} h={20} c="#111" sw={1.5}><circle cx="13" cy="7" r="6.2" /><path d="M8.6 11.6L1 19.4" /></Ico>Type here to search</TaskSearch>
    <TaskApp w={62} u={0}><Ico w={20} h={20} c="#000" sw={2.6}><circle cx="9" cy="10" r="8.4" /></Ico></TaskApp>
    <TaskApp w={63}><Ico w={28} h={24} fill="#ffd45c"><path d="M1 1Q1 0 2 0H11L13 3H1Z" fill="#e0a010" /><path d="M1 3H26Q27 3 27 4V22Q27 23 26 23H1Z" /><path d="M5 24V14.5Q5 13 6.5 13H21.5Q23 13 23 14.5V24H18V18H10V24Z" fill="#3a96dd" /></Ico></TaskApp>
    <TaskApp w={62}><Ico w={30} h={30} fill="#1483c8">
      <defs><linearGradient id="eg" x1="0" x2="1" y1="0" y2="0.4"><stop offset="0" stopColor="#28b4e8" /><stop offset="1" stopColor="#5fd858" /></linearGradient></defs>
      <circle cx="15" cy="15" r="15" fill="#1278cc" /><path d="M0.6 12A15 15 0 0 1 30 15Q29.6 21 23 21Q17 21 19 17.4Q20 12 14 11Q5 10 0.6 16Z" fill="url(#eg)" />
      <path d="M9 14Q6 24 16 29.9Q24 29 28 22.6Q22 26 17 22Q13 19 14.6 13Q11 11.5 9 14Z" fill="#124a96" /></Ico></TaskApp>
    <TaskApp w={62} u={0}><Ico w={30} h={27} fill="#28a8ea"><path d="M0 10L15 0L30 10V27H0Z" fill="#0f5fae" /><path d="M3 10H27V20H3Z" fill="#f2f6fa" /><path d="M0 10L15 20L30 10V27H0Z" /><path d="M30 10V27H8Z" fill="#1484d4" opacity="0.5" /></Ico></TaskApp>
    <TaskApp w={62}><Ico w={28} h={28} fill="#fff"><circle cx="14" cy="14" r="14" fill="#fbc118" /><path d="M14 14L1.88 7A14 14 0 0 1 26.12 7Z" fill="#e33b2e" /><path d="M14 14L1.88 7A14 14 0 0 0 14 28L20 17Z" fill="#2da94f" /><path d="M14 7H26.12L20 10Z" fill="#e33b2e" /><circle cx="14" cy="14" r="6.6" /><circle cx="14" cy="14" r="5.2" fill="#4285f4" /></Ico></TaskApp>
    <TaskApp w={61} u={61} on><UnityBadge $s={26}><Unity w={14} c="#fff" /></UnityBadge></TaskApp>
    <TaskApp w={63}><Ico w={30} h={30} fill="#1f8fd6"><path d="M21 0L30 4V26L21 30L9 18.5L3 23L0 21.5V19L21 1Z" fill="#1a86cf" /><path d="M0 8.5L3 7L21.5 21.5V30L0 11Z" fill="#0a66b0" /><path d="M21.5 0L30 4V26L21.5 30Z" fill="#38a9f0" /><path d="M21.5 8.5V21.5L12.6 15Z" fill="#e8d0da" /><path d="M0 11.5L4.5 15L0 18.5Z" fill="#e8d0da" /></Ico></TaskApp>
    <Gap $w={480} />
    <Ico w={26} h={24} fill="#fdb52a"><circle cx="11.5" cy="12" r="11.5" fill="#fcb12c" /><circle cx="9" cy="9" r="7" fill="#ffd25a" opacity="0.7" /><path d="M12 20Q9 20 9 17Q9 14.5 12 14Q13 10 17 10Q20 10 21 13Q25 13.5 25 16.6Q25 20 21.5 20Z" fill="#cfeafd" /></Ico>
    <Gap $w={12} /><Text $s={17.5} $w={47} $ls={-0.5}>33°C</Text><Text $s={17.5} $w={66} $ls={-0.1}>Cerah</Text>
    <Ico w={17} h={9} c="#111" sw={1.5}><path d="M0.6 8.4L8.5 0.8L16.4 8.4" /></Ico><Gap $w={16} />
    <Ico w={15} h={19} c="#111" sw={1.4}><rect x="0.8" y="4.6" width="9" height="10" rx="2" /><path d="M9.8 8L13.6 5.5V13.7L9.8 11.3M1.5 2Q6 -0.6 10.5 2M1.5 17.2Q6 19.8 10.5 17.2" /></Ico><Gap $w={11} />
    <Ico w={20} h={14} fill="#e4e4e4"><path d="M4 13.4Q0.7 13 0.7 9.6Q0.7 6.6 4 6Q5 1 10 1Q14 1 15 5Q19.4 5.4 19.4 9.4Q19.4 13.4 15.6 13.4Z" stroke="#222" strokeWidth="1.3" /><path d="M1.5 8Q3 6.5 5 6.5L12 10L18.5 8Q18 5.5 15 5.2Q14 1.5 10 1.5Q5.5 1.5 4.5 6Z" fill="#8a8a8a" /></Ico><Gap $w={10} />
    <Ico w={20} h={14} c="#111" sw={1.3}><path d="M5 4H17.5V12.5H5Z M17.5 6.5H19.5V10.5H17.5" /><path d="M6.5 5.5H13V11H6.5Z" fill="#111" /><path d="M1 0V3.5H4.5V0M2.7 3.5V8" /></Ico><Gap $w={13} />
    <Ico w={16} h={16} c="#111" sw={1.3}><path d="M1 14Q2 3 15 1M4.5 15Q5 7 15 5M8 15.5Q9 10 15 9" /><circle cx="13.6" cy="14" r="1.6" fill="#111" stroke="none" /></Ico><Gap $w={11} />
    <Ico w={20} h={16} c="#111" sw={1.3}><path d="M1 5.5H4L7.5 2V14L4 10.5H1Z M10.5 5.5Q12 8 10.5 10.5M13.5 3.5Q16 8 13.5 12.5" /><path d="M16.6 1.5Q20 8 16.6 14.5" stroke="#999" /></Ico><Gap $w={15} />
    <Ico w={21} h={20} c="#111" sw={1.4}><path d="M5 18L6 14L13 2Q15 0.5 16.5 2.5L9 15ZM5 10Q1 10 0.8 14Q0.8 19 5 18.6M13 9Q20 7 19.5 9.5Q19 12 14 13Q12 18 9.5 17.5" /></Ico>
    <Gap $w={9} />
    <Clock>10:46 AM<br />10/16/2021</Clock><Gap $w={15} />
    <Ico w={21} h={20} fill="#000"><path d="M0 0H20V16H8L5 19V16H0Z" /><path d="M3.5 4.5H16.5M3.5 8H16.5M3.5 11.5H10" stroke="#dfd1e3" strokeWidth="1.3" /><path d="M16 10Q20 13 17 16Q14.5 18.5 11.5 16.5Q16 16 16 10Z" fill="#dfd1e3" stroke="#000" /></Ico>
    <Gap $w={24} /><Ico w={1} h={50} fill="#a79fb0"><rect width="1" height="50" /></Ico>
  </Taskbar>
);

const TopLeft = styled.div`display: flex; height: 404px; > div { height: 404px; }`;
const BottomLeft = styled.div`display: flex; height: 505px; > div { height: 505px; width: 1093px; }`;

export default function App() {
  return (
    <Screen>
      <Global />
      <TitleBar>
        <UnityBadge $s={17}><Unity w={9} c="#ddd" /></UnityBadge><Gap $w={7} />
        <Text $w={1738}>flappycopter - Menu - Android - Unity 2020.3.18f1 Personal* &lt;DX11&gt;</Text>
        <Ico w={12} h={12} c="#000" sw={1.2}><path d="M0 6H12" /></Ico><Gap $w={46} />
        <Ico w={12} h={12} c="#000" sw={1.2}><path d="M0.6 2.8H9.2V11.4H0.6ZM2.8 2.8V0.6H11.4V9.2H9.2" /></Ico><Gap $w={47} />
        <Ico w={12} h={12} c="#000" sw={1.2}><path d="M0 0L12 12M12 0L0 12" /></Ico>
      </TitleBar>
      <MenuBar>
        {[["File", 37.5], ["Edit", 39.5], ["Assets", 55], ["GameObject", 97], ["Component", 92], ["Window", 69], ["Help", 60]].map(([t, w]) => <MenuItem key={t} $w={w} $ls={-0.25}>{t}</MenuItem>)}
      </MenuBar>
      <EditorToolbar />
      <Main>
        <Col $w={1093}>
          <TopLeft><Hierarchy /><Gap $w={2} /><ScenePanel /></TopLeft>
          <Gap $h={2} />
          <BottomLeft><Project /></BottomLeft>
        </Col>
        <Inspector />
      </Main>
      <Status>
        <Ico w={17} h={18} fill="#e0e0e0"><circle cx="8.5" cy="8" r="8" /><path d="M10 14H16V18Z" /><path d="M8.5 3V9.5M8.5 11V13.4" stroke="#191919" strokeWidth="2.4" /></Ico><Gap $w={5} />
        <Text $ls={0.07}>[TMP Examples &amp; Extras] have been imported.</Text><Grow />
        <StatusIcon><Ico w={19} h={19} fill="#c4c4c4"><ellipse cx="9.5" cy="11" rx="5" ry="7" /><circle cx="9.5" cy="4" r="3" /><path d="M1 5L5 8M18 5L14 8M0.5 11H5M18.5 11H14M2 18L6 14M17 18L13 14" stroke="#c4c4c4" strokeWidth="1.5" /><Slash /><path d="M1 1L16 18" stroke="#c4c4c4" strokeWidth="1.5" /></Ico></StatusIcon>
        <StatusIcon><Ico w={18} h={19} fill="#c4c4c4"><ellipse cx="9" cy="4" rx="7.5" ry="3" /><path d="M1.5 6.5Q9 10.5 16.5 6.5V9.5Q9 13.5 1.5 9.5ZM1.5 12Q9 16 16.5 12V15.5Q9 19.5 1.5 15.5Z" /><Slash /><path d="M1 1L16 18" stroke="#c4c4c4" strokeWidth="1.5" /></Ico></StatusIcon>
        <StatusIcon $w={32}><Ico w={19} h={19}><circle cx="9.5" cy="9.5" r="7.8" strokeDasharray="9 3" strokeWidth="1.6" /><path d="M9.5 4A4 4 0 0 1 12 11V14H7V11A4 4 0 0 1 9.5 4Z" fill="#c4c4c4" stroke="none" /><Slash /><path d="M1 1L16 18" strokeWidth="1.5" /></Ico></StatusIcon>
        <StatusIcon $w={34}><Ico w={20} h={18} sw={1.4}><circle cx="8.5" cy="9" r="8" /><path d="M5 9L7.5 11.5L12 6.5" strokeWidth="1.6" /></Ico></StatusIcon>
      </Status>
      <TaskBarRow />
    </Screen>
  );
}
